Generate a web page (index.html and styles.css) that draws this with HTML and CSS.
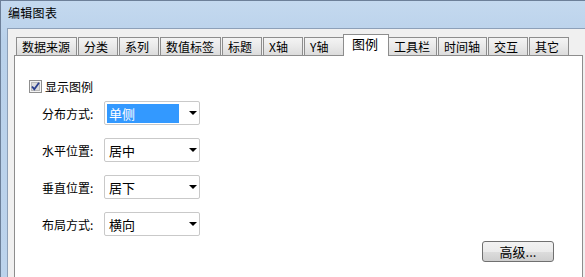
FILE: index.html
```html
<!DOCTYPE html>
<html lang="zh-CN">

<head>
  <meta charset="UTF-8" />
  <title>编辑图表</title>
  <link rel="stylesheet" href="styles.css">
</head>

<body>
  <div class="window">
    <div class="titlebar">编辑图表</div>

    <div class="client">
      <div class="tabs">
        <div class="tab">数据来源</div>
        <div class="tab">分类</div>
        <div class="tab">系列</div>
        <div class="tab">数值标签</div>
        <div class="tab">标题</div>
        <div class="tab">X轴</div>
        <div class="tab">Y轴</div>
        <div class="tab active">图例</div>
        <div class="tab">工具栏</div>
        <div class="tab">时间轴</div>
        <div class="tab">交互</div>
        <div class="tab">其它</div>
      </div>

      <div class="panel">
        <label class="check-row">
          <span class="checkbox">
            <svg width="13" height="13" viewBox="0 0 13 13">
              <rect x="0.5" y="0.5" width="12" height="12" fill="#f4f4f4" stroke="#8f8f8f" />
              <rect x="2.5" y="2.5" width="8" height="8" fill="#dcdcdc" stroke="#b9b9b9" />
              <path d="M3 6.5 L5.3 9.2 L10 2.8" fill="none" stroke="#2a3f8f" stroke-width="1.8" />
            </svg>
          </span>
          显示图例
        </label>

        <div class="form-row">
          <span class="label">分布方式:</span>
          <div class="combo">
            <span class="combo-text selected">单侧</span>
            <span class="arrow"></span>
          </div>
        </div>

        <div class="form-row">
          <span class="label">水平位置:</span>
          <div class="combo">
            <span class="combo-text">居中</span>
            <span class="arrow"></span>
          </div>
        </div>

        <div class="form-row">
          <span class="label">垂直位置:</span>
          <div class="combo">
            <span class="combo-text">居下</span>
            <span class="arrow"></span>
          </div>
        </div>

        <div class="form-row">
          <span class="label">布局方式:</span>
          <div class="combo">
            <span class="combo-text">横向</span>
            <span class="arrow"></span>
          </div>
        </div>

        <div class="actions">
          <button class="btn">高级...</button>
        </div>
      </div>
    </div>
  </div>
</body>

</html>
```

FILE: styles.css
```css
body {
  margin: 0;
  padding: 0;
  font-family: "Noto Sans CJK SC", "Liberation Sans", sans-serif;
  font-size: 12px;
  color: #000;
  overflow: hidden;
}

.window {
  height: 277px;
  display: flex;
  flex-direction: column;
  box-sizing: border-box;
  border-top: 1px solid #6d8099;
  border-left: 1px solid #6d8099;
  padding-left: 6px;
  background: linear-gradient(to bottom, #c4d9ef, #b9d1ea 40px, #bcd3ec);
}

.titlebar {
  height: 27px;
  line-height: 24px;
  padding-left: 1px;
  font-size: 12px;
  letter-spacing: 0.3px;
}

.client {
  flex: 1;
  background-color: #f0f0f0;
  border-top: 1px solid #8da0b8;
  border-left: 1px solid #8da0b8;
  display: flex;
  flex-direction: column;
}

.tabs {
  display: flex;
  align-items: flex-end;
  gap: 1px;
  padding-top: 6px;
  padding-left: 8px;
  height: 20px;
}

.tab {
  box-sizing: border-box;
  min-width: 40px;
  height: 18px;
  line-height: 17px;
  padding: 0 6px 0 5px;
  border: 1px solid #8d8d8d;
  border-bottom: none;
  background: linear-gradient(to bottom, #f4f4f4, #e9e9e9 50%, #dcdcdc);
  white-space: nowrap;
}

.tab.active {
  position: relative;
  z-index: 1;
  height: 22px;
  min-width: 46px;
  margin: 0 -2px -1px;
  padding-left: 8px;
  line-height: 18px;
  background: #fff;
  font-size: 13px;
}

.panel {
  flex: 1;
  margin-left: 6px;
  margin-right: 2px;
  border: 1px solid #8d8d8d;
  border-bottom: none;
  background-color: #fff;
  display: flex;
  flex-direction: column;
}

.check-row {
  display: flex;
  align-items: center;
  gap: 3px;
  height: 16px;
  margin-top: 22px;
  margin-left: 14px;
}

.checkbox {
  display: flex;
  width: 13px;
  height: 13px;
}

.form-row {
  display: flex;
  align-items: center;
  margin-left: 27px;
  margin-top: 13px;
  height: 24px;
}

.check-row + .form-row {
  margin-top: 7px;
}

.label {
  width: 62px;
}

.combo {
  box-sizing: border-box;
  width: 96px;
  height: 24px;
  border: 1px solid #c9c9c9;
  border-radius: 2px;
  display: flex;
  align-items: center;
  padding-left: 2px;
}

.combo-text {
  width: 70px;
  height: 19px;
  line-height: 19px;
  padding-left: 2px;
  font-size: 13px;
}

.combo-text.selected {
  background-color: #3399ff;
  color: #fff;
}

.arrow {
  margin-left: 10px;
  width: 0;
  height: 0;
  border-left: 4px solid transparent;
  border-right: 4px solid transparent;
  border-top: 4px solid #000;
}

.actions {
  display: flex;
  justify-content: flex-end;
  margin-top: 5px;
  margin-right: 28px;
}

.btn {
  width: 72px;
  height: 21px;
  padding: 0;
  border: 1px solid #707070;
  border-radius: 3px;
  background: linear-gradient(to bottom, #f2f2f2, #ebebeb 50%, #dddddd 51%, #cfcfcf);
  font-family: "Noto Sans CJK SC", "Liberation Sans", sans-serif;
  font-size: 13px;
  line-height: 18px;
  color: #000;
}
```
